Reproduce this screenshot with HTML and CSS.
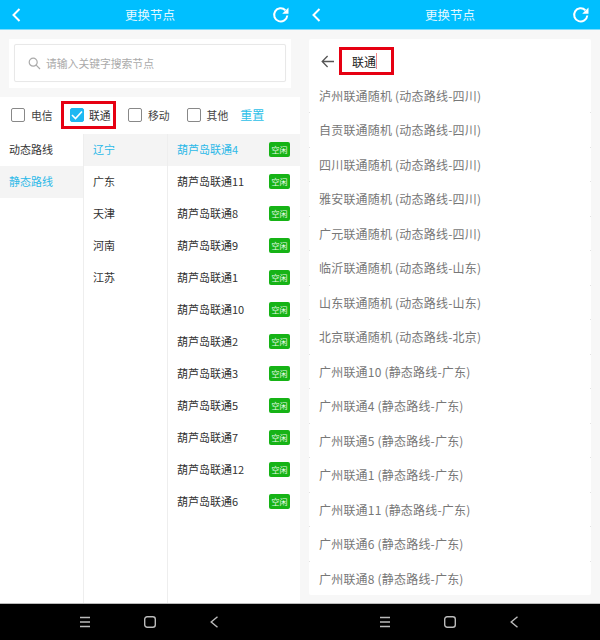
FILE: index.html
```html
<!DOCTYPE html>
<html lang="zh-CN">
<head>
<meta charset="UTF-8" />
<title>更换节点</title>
<link rel="stylesheet" href="styles.css">
</head>
<body>
<div class="screens">

  <!-- Left: filter view -->
  <div class="screen">
    <div class="topbar">
      <svg class="topIcon" width="18" height="16" viewBox="0 0 18 16"><path d="M9.5 2 L3.5 8 L9.5 14" /></svg>
      <span class="topTitle">更换节点</span>
      <svg class="topIcon" width="18" height="18" viewBox="0 0 18 18"><path d="M15.3 9.5 A6.6 6.6 0 1 1 13.4 4.2" /><path class="fill" d="M16.5 1.5 V7.8 H10.2 Z" /></svg>
    </div>
    <div class="searchWrap">
      <div class="searchCard">
        <div class="searchBox">
          <svg width="13" height="13" viewBox="0 0 13 13"><circle cx="5.2" cy="5.2" r="4" /><path d="M8.2 8.2 L12 12" /></svg>
          <span>请输入关键字搜索节点</span>
        </div>
      </div>
    </div>
    <div class="filters">
      <div class="check"><i class="box"></i>电信</div>
      <div class="check picked">
        <i class="box on"><svg width="12" height="10" viewBox="0 0 12 10"><path d="M1 5 L4.5 8.5 L11 1.5" /></svg></i>联通
      </div>
      <div class="check"><i class="box"></i>移动</div>
      <div class="check"><i class="box"></i>其他</div>
      <span class="reset">重置</span>
    </div>
    <div class="columns">
      <div class="colType">
        <div class="cell">动态路线</div>
        <div class="cell active">静态路线</div>
      </div>
      <div class="colProv">
        <div class="cell active">辽宁</div>
        <div class="cell">广东</div>
        <div class="cell">天津</div>
        <div class="cell">河南</div>
        <div class="cell">江苏</div>
      </div>
      <div class="colNode">
        <div class="cell active"><span>葫芦岛联通4</span><b class="tag">空闲</b></div>
        <div class="cell"><span>葫芦岛联通11</span><b class="tag">空闲</b></div>
        <div class="cell"><span>葫芦岛联通8</span><b class="tag">空闲</b></div>
        <div class="cell"><span>葫芦岛联通9</span><b class="tag">空闲</b></div>
        <div class="cell"><span>葫芦岛联通1</span><b class="tag">空闲</b></div>
        <div class="cell"><span>葫芦岛联通10</span><b class="tag">空闲</b></div>
        <div class="cell"><span>葫芦岛联通2</span><b class="tag">空闲</b></div>
        <div class="cell"><span>葫芦岛联通3</span><b class="tag">空闲</b></div>
        <div class="cell"><span>葫芦岛联通5</span><b class="tag">空闲</b></div>
        <div class="cell"><span>葫芦岛联通7</span><b class="tag">空闲</b></div>
        <div class="cell"><span>葫芦岛联通12</span><b class="tag">空闲</b></div>
        <div class="cell"><span>葫芦岛联通6</span><b class="tag">空闲</b></div>
      </div>
    </div>
    <div class="navbar">
      <svg width="12" height="12" viewBox="0 0 12 12"><path d="M1 1.5 H11 M1 6 H11 M1 10.5 H11" /></svg>
      <svg width="12" height="12" viewBox="0 0 12 12"><rect x="0.7" y="0.7" width="10.6" height="10.6" rx="2.5" /></svg>
      <svg width="9" height="12" viewBox="0 0 9 12"><path d="M8.5 0.8 L2.2 6 L8.5 11.2" /></svg>
    </div>
  </div>

  <!-- Right: search results view -->
  <div class="screen">
    <div class="topbar">
      <svg class="topIcon" width="18" height="16" viewBox="0 0 18 16"><path d="M9.5 2 L3.5 8 L9.5 14" /></svg>
      <span class="topTitle">更换节点</span>
      <svg class="topIcon" width="18" height="18" viewBox="0 0 18 18"><path d="M15.3 9.5 A6.6 6.6 0 1 1 13.4 4.2" /><path class="fill" d="M16.5 1.5 V7.8 H10.2 Z" /></svg>
    </div>
    <div class="results">
      <div class="resultCard">
        <div class="queryRow">
          <svg width="14" height="13" viewBox="0 0 14 13"><path d="M13 6.5 H1.2 M6.6 1 L1.2 6.5 L6.6 12" /></svg>
          <div class="query"><span>联通</span><i class="caret"></i></div>
        </div>
        <div class="result">泸州联通随机 (动态路线-四川)</div>
        <div class="result">自贡联通随机 (动态路线-四川)</div>
        <div class="result">四川联通随机 (动态路线-四川)</div>
        <div class="result">雅安联通随机 (动态路线-四川)</div>
        <div class="result">广元联通随机 (动态路线-四川)</div>
        <div class="result">临沂联通随机 (动态路线-山东)</div>
        <div class="result">山东联通随机 (动态路线-山东)</div>
        <div class="result">北京联通随机 (动态路线-北京)</div>
        <div class="result">广州联通10 (静态路线-广东)</div>
        <div class="result">广州联通4 (静态路线-广东)</div>
        <div class="result">广州联通5 (静态路线-广东)</div>
        <div class="result">广州联通1 (静态路线-广东)</div>
        <div class="result">广州联通11 (静态路线-广东)</div>
        <div class="result">广州联通6 (静态路线-广东)</div>
        <div class="result">广州联通8 (静态路线-广东)</div>
      </div>
    </div>
    <div class="navbar">
      <svg width="12" height="12" viewBox="0 0 12 12"><path d="M1 1.5 H11 M1 6 H11 M1 10.5 H11" /></svg>
      <svg width="12" height="12" viewBox="0 0 12 12"><rect x="0.7" y="0.7" width="10.6" height="10.6" rx="2.5" /></svg>
      <svg width="9" height="12" viewBox="0 0 9 12"><path d="M8.5 0.8 L2.2 6 L8.5 11.2" /></svg>
    </div>
  </div>

</div>
</body>
</html>
```

FILE: styles.css
```css
body {
  margin: 0;
  font-family: "Noto Sans CJK SC", "Noto Sans", sans-serif;
  font-size: 12px;
  background: #fff;
}
.screens {
  display: flex;
  width: 600px;
  height: 640px;
  overflow: hidden;
}
.screen {
  width: 300px;
  height: 640px;
  display: flex;
  flex-direction: column;
}

/* Top bar */
.topbar {
  height: 29px;
  flex: none;
  background: #00bfff;
  border-bottom: 1px solid #7fdcfb;
  padding: 0 10px;
  display: flex;
  align-items: center;
  justify-content: space-between;
}
.topTitle {
  color: #e4f8ff;
  font-size: 12.5px;
}
.topIcon path {
  fill: none;
  stroke: #fff;
  stroke-width: 2;
}
.topIcon path.fill {
  fill: #fff;
  stroke: none;
}

/* Search */
.searchWrap {
  height: 67px;
  flex: none;
  box-sizing: border-box;
  background: #f7f7f7;
  padding: 9px;
}
.searchCard {
  height: 49px;
  box-sizing: border-box;
  background: #fff;
  padding: 5px;
}
.searchBox {
  height: 38px;
  box-sizing: border-box;
  border: 1px solid #e8e8e8;
  border-radius: 2px;
  box-shadow: 0 0 1px #eee;
  display: flex;
  align-items: center;
  gap: 5px;
  padding-left: 13px;
  color: #aaa;
  font-size: 10.8px;
}
.searchBox svg {
  fill: none;
  stroke: #aaa;
  stroke-width: 1.2;
}

/* Filter row */
.filters {
  height: 36.5px;
  flex: none;
  box-sizing: border-box;
  display: flex;
  align-items: center;
  padding: 0 0 1px 11px;
  color: #444;
  font-size: 10.8px;
}
.check {
  display: flex;
  align-items: center;
  gap: 6px;
  margin-right: 17px;
}
.box {
  width: 12px;
  height: 12px;
  border: 1px solid #888;
  border-radius: 2px;
  display: flex;
  align-items: center;
  justify-content: center;
}
.box.on {
  border-color: #1eb8f2;
  background: #1eb8f2;
}
.box svg {
  fill: none;
  stroke: #fff;
  stroke-width: 1.6;
}
.check.picked {
  box-sizing: border-box;
  height: 28px;
  margin: 0 12px 0 -8.6px;
  padding: 0 0 0 6px;
  width: 55px;
  border: 3px solid #e60012;
  gap: 5px;
  color: #333;
}
.reset {
  color: #2cc0e8;
  font-size: 12px;
  margin-left: -5px;
}

/* Three columns */
.columns {
  flex: 1;
  display: flex;
  min-height: 0;
}
.colType {
  width: 83px;
  flex: none;
}
.colProv {
  width: 84px;
  flex: none;
  box-sizing: border-box;
  border-left: 1px solid #eee;
}
.colNode {
  flex: 1;
  border-left: 1px solid #eee;
}
.cell {
  height: 32px;
  box-sizing: border-box;
  display: flex;
  align-items: center;
  justify-content: space-between;
  padding: 0 10px 1px 9px;
  color: #333;
  font-size: 11px;
}
.cell.active {
  background: #f4f4f4;
  color: #2cb9e8;
}
.tag {
  width: 21px;
  height: 15px;
  flex: none;
  background: #16b316;
  border-radius: 2px;
  color: #e6f9e6;
  font-size: 8px;
  font-weight: normal;
  line-height: 15px;
  text-align: center;
}

/* Search results */
.results {
  flex: 1;
  background: #f7f7f7;
  padding: 9px 9px 8px;
  min-height: 0;
}
.resultCard {
  height: 100%;
  box-sizing: border-box;
  background: #fff;
  border-radius: 2px;
  padding-top: 8px;
}
.queryRow {
  display: flex;
  align-items: center;
  height: 28px;
  margin-bottom: 3.5px;
  padding-left: 12px;
  gap: 4px;
}
.queryRow svg {
  fill: none;
  stroke: #555;
  stroke-width: 1.3;
}
.query {
  box-sizing: border-box;
  width: 55px;
  height: 28px;
  border: 3px solid #e60012;
  display: flex;
  align-items: center;
  padding-left: 10px;
  color: #222;
  font-size: 12px;
}
.caret {
  width: 1px;
  height: 16px;
  background: #f28a8a;
}
.result {
  height: 34.5px;
  line-height: 34.5px;
  padding-left: 10px;
  color: #777;
  font-size: 12px;
  letter-spacing: 0.2px;
  background:
    linear-gradient(#e2e2e2, #e2e2e2) left bottom / 1px 1px no-repeat,
    linear-gradient(#e2e2e2, #e2e2e2) right bottom / 1px 1px no-repeat;
}
.result:last-child {
  background: none;
}

/* Android nav */
.navbar {
  height: 37px;
  flex: none;
  box-sizing: border-box;
  background: #000;
  border-top: 1px solid #bbb;
  padding-left: 79px;
  display: flex;
  align-items: center;
  gap: 53px;
}
.navbar svg {
  fill: none;
  stroke: #bbb;
  stroke-width: 1.4;
}
```
